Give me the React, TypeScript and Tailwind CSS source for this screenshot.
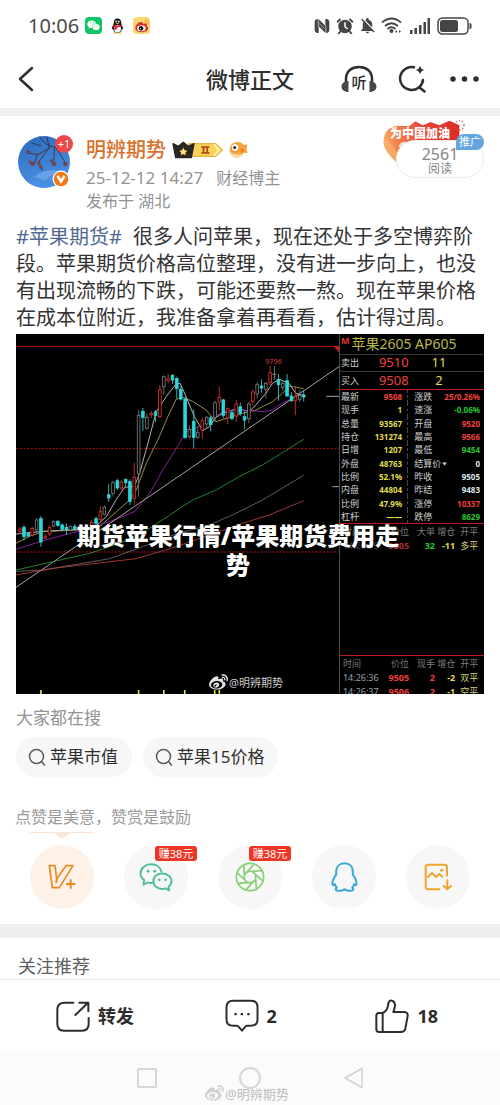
import type { ReactNode } from "react";
import clsx from "clsx";
import { FaWeibo, FaWeixin } from "react-icons/fa";
import { MdNotificationsOff } from "react-icons/md";

type Candle = [x: number, high: number, top: number, bottom: number, low: number, kind: "u" | "d" | "g"];

const CANDLES: Candle[] = [
  [30, 590, 597, 604, 612, "u"],
  [42, 585, 592, 620, 632, "d"],
  [55, 605, 610, 618, 622, "d"],
  [67, 590, 595, 615, 620, "u"],
  [80, 565, 570, 600, 610, "g"],
  [93, 558, 566, 636, 650, "d"],
  [106, 612, 620, 624, 628, "u"],
  [119, 585, 592, 612, 618, "u"],
  [131, 572, 574, 588, 592, "g"],
  [144, 570, 574, 586, 590, "d"],
  [157, 580, 585, 598, 604, "d"],
  [170, 580, 592, 598, 615, "d"],
  [182, 586, 590, 600, 604, "g"],
  [195, 582, 590, 598, 602, "d"],
  [208, 584, 590, 600, 606, "u"],
  [246, 570, 578, 590, 595, "u"],
  [259, 560, 566, 580, 586, "d"],
  [272, 530, 545, 568, 575, "u"],
  [284, 526, 532, 553, 556, "g"],
  [297, 462, 494, 504, 516, "d"],
  [310, 452, 458, 490, 500, "g"],
  [323, 446, 452, 474, 480, "d"],
  [335, 450, 456, 474, 480, "u"],
  [348, 446, 448, 458, 470, "d"],
  [361, 448, 455, 514, 525, "d"],
  [374, 398, 442, 505, 525, "u"],
  [387, 240, 256, 430, 500, "g"],
  [400, 234, 244, 262, 302, "d"],
  [412, 250, 262, 295, 298, "g"],
  [425, 242, 250, 254, 264, "u"],
  [438, 240, 246, 256, 276, "d"],
  [451, 165, 180, 260, 264, "u"],
  [463, 136, 140, 170, 195, "g"],
  [476, 132, 146, 152, 160, "u"],
  [489, 132, 136, 150, 162, "d"],
  [502, 140, 146, 176, 206, "d"],
  [514, 168, 178, 207, 212, "d"],
  [527, 200, 207, 323, 326, "d"],
  [540, 285, 298, 320, 326, "g"],
  [553, 238, 274, 322, 355, "d"],
  [565, 290, 308, 322, 326, "g"],
  [579, 262, 272, 300, 326, "u"],
  [592, 258, 262, 282, 296, "g"],
  [604, 258, 264, 284, 304, "d"],
  [617, 212, 218, 262, 276, "g"],
  [630, 170, 202, 216, 240, "u"],
  [642, 206, 210, 256, 264, "d"],
  [655, 232, 236, 264, 282, "u"],
  [668, 240, 248, 266, 270, "d"],
  [681, 210, 222, 258, 276, "u"],
  [693, 218, 230, 250, 258, "d"],
  [706, 244, 260, 270, 298, "d"],
  [719, 216, 222, 266, 280, "g"],
  [731, 178, 186, 214, 226, "u"],
  [744, 156, 164, 192, 205, "g"],
  [757, 148, 168, 174, 188, "d"],
  [770, 156, 160, 178, 205, "g"],
  [783, 108, 128, 158, 165, "u"],
  [796, 108, 132, 134, 150, "g"],
  [808, 132, 148, 164, 212, "d"],
  [821, 150, 160, 172, 182, "g"],
  [834, 132, 152, 198, 200, "d"],
  [847, 186, 198, 212, 216, "d"],
  [859, 170, 200, 212, 256, "u"],
  [872, 180, 196, 208, 216, "g"],
  [884, 180, 195, 201, 215, "d"],
];

const CANDLE_COLORS = { u: "#e0342f", d: "#2fd6d8", g: "#7c7c7c" };

const LINES = [
  { color: "#d8d8d8", points: "18,612 100,604 200,598 250,595 290,560 320,508 345,472 375,468 390,430 415,340 440,245 470,200 498,164 512,160 530,200 555,260 580,302 600,290 620,262 640,250 670,240 700,240 720,245 740,225 770,190 790,160 810,148 840,160 860,190 884,196" },
  { color: "#b5a95a", points: "18,640 60,618 100,605 200,600 270,590 320,545 360,510 380,480 410,400 445,330 475,260 500,208 520,202 550,214 590,240 620,275 660,262 700,250 740,240 790,215 820,190 840,168 884,176" },
  { color: "#a026b8", points: "18,658 100,632 200,605 300,575 375,545 420,490 460,420 510,340 530,305 580,285 640,245 690,240 765,245 790,240 810,225 850,205 870,195 884,195" },
  { color: "#c4c4c4", points: "18,772 480,458 990,110" },
  { color: "#2e9a3a", points: "18,720 120,697 240,670 330,640 420,595 480,556 510,535 550,510 620,480 690,440 760,405 820,368 884,328" },
  { color: "#6e6e6e", points: "18,724 100,720 200,703 300,686 400,650 500,612 600,585 680,550 760,510 830,468 884,436" },
  { color: "#b8413a", points: "18,735 130,715 240,702 380,686 500,650 600,615 700,580 780,555 840,530 884,512" },
];

const RED = "text-[#f0403c]";
const YELLOW = "text-[#e2dc4a]";
const GREEN = "text-[#25c632]";
const WHITE = "text-[#dbe6ea]";

const QUOTES = [
  ["最新", "9508", RED, "涨跌", "25/0.26%", RED],
  ["现手", "1", YELLOW, "速涨", "-0.06%", GREEN],
  ["总量", "93567", YELLOW, "开盘", "9520", RED],
  ["持仓", "131274", YELLOW, "最高", "9566", RED],
  ["日增", "1207", YELLOW, "最低", "9454", GREEN],
  ["外盘", "48763", YELLOW, "结算价", "0", WHITE],
  ["比例", "52.1%", YELLOW, "昨收", "9505", WHITE],
  ["内盘", "44804", YELLOW, "昨结", "9483", WHITE],
  ["比例", "47.9%", YELLOW, "涨停", "10337", RED],
  ["杠杆", "——", YELLOW, "跌停", "8629", GREEN],
];

function StatusBar() {
  return (
    <div className="flex h-[51px] items-center justify-between pr-7 pl-7">
      <div className="flex items-center">
        <span className="text-xl text-[#4a4a4a]">10:06</span>
        <span className="ml-[6px] flex size-[17px] items-center justify-center rounded-[4px] bg-[#10c565]">
          <FaWeixin className="size-[13px] text-white" />
        </span>
        <svg viewBox="0 0 24 30" className="ml-[9px] h-4 w-[13px]" aria-hidden="true">
          <path d="M12 1c5 0 7 4 7 8 0 4 4 8 3.500 13l-2-2c-1 5-4 8-8.500 8s-7.500-3-8.500-8l-2 2C1 17 5 13 5 9c0-4 2-8 7-8z" fill="#15151a" />
          <ellipse cx="12" cy="20" rx="6.500" ry="7" fill="#fff" />
          <path d="M4 12c5 3 11 3 16 0l1 3c-3 2-6 2.500-9 2.500l-3 5H6l.5-6-3.500-2z" fill="#e3222b" />
          <ellipse cx="9.500" cy="6.500" rx="1.500" ry="2" fill="#fff" />
          <ellipse cx="14.500" cy="6.500" rx="1.500" ry="2" fill="#fff" />
          <path d="M8 10q4-2 8 0-4 3-8 0zM5 27h6v2H4zM13 27h6l1 2h-7z" fill="#f0a020" />
        </svg>
        <span className="ml-[9px] flex size-[17px] items-center justify-center rounded-[4px] bg-[#fbd873]">
          <svg viewBox="0 0 24 24" className="size-4" aria-hidden="true">
            <path d="M2 15c0-5 6-10 10-9 2 .5 1 3 1 3s5-2 6 0c1 1.500-.5 3 0 3.500 5 3 1 9-7 9-6 0-10-3-10-6.500z" fill="#dd2a25" />
            <ellipse cx="11" cy="15.500" rx="6.500" ry="4.500" fill="#fff" />
            <circle cx="10.500" cy="15.500" r="3.500" fill="#111" />
            <circle cx="9.500" cy="16" r="1" fill="#fff" />
            <path d="M16 3c4-.5 6.500 3 5.500 6.500M16.500 6c2-.3 3 1 2.500 2.700" fill="none" stroke="#f39a2b" strokeWidth="1.500" />
          </svg>
        </span>
      </div>
      <div className="flex items-center text-[#454545]">
        <svg viewBox="0 0 48 48" className="size-4" aria-hidden="true">
          <path d="M14 3H9Q2 4 2 12v24q0 8 7 9h5zM34 3h5q7 1 7 9v24q0 8-7 9h-5z" fill="currentColor" />
          <path d="M14 8l18 18v18M34 40L16 22V4" stroke="#fff" strokeWidth="9" fill="none" />
          <path d="M14 6l19 19v18M34 42L15 23V5M17 14l15 15M17 20l15 15" stroke="currentColor" strokeWidth="3.500" fill="none" />
        </svg>
        <svg viewBox="0 0 24 24" className="ml-[6px] size-[18px]" aria-hidden="true">
          <circle cx="12" cy="12.500" r="9" fill="currentColor" />
          <path d="M12 7v6l3.500 3" fill="none" stroke="#fff" strokeWidth="2" />
          <path d="M1.500 7L6 2.500M22.500 7L18 2.500M6 19l-3 3.500M18 19l3 3.500" stroke="currentColor" strokeWidth="2.500" />
        </svg>
        <MdNotificationsOff className="ml-1 size-[19px]" />
        <svg viewBox="0 0 42 34" className="ml-1 h-[17px] w-[21px]" aria-hidden="true">
          <g fill="none" stroke="currentColor" strokeWidth="3.500">
            <path d="M2 11q19-16 38 0M8 18q13-11 26 0M13 24q8-7 16 0" />
          </g>
          <circle cx="21" cy="28" r="4" fill="currentColor" />
          <path d="M28 29l4-3v6zM40 29l-4-3v6z" fill="currentColor" />
        </svg>
        <svg viewBox="0 0 40 32" className="ml-2 h-4 w-5" fill="currentColor" aria-hidden="true">
          <path d="M0 24h5v8H0zM9 20h5v12H9zM18 14h5v18h-5zM27 8h5v24h-5zM35 0h5v32h-5z" />
        </svg>
        <svg viewBox="0 0 70 36" className="ml-[7px] h-[18px] w-[35px]" aria-hidden="true">
          <rect x="2" y="2" width="60" height="32" rx="9" fill="none" stroke="currentColor" strokeWidth="3" />
          <rect x="6" y="6" width="36" height="24" rx="5" fill="currentColor" />
          <path d="M65 12q4 0 4 3v6q0 3-4 3z" fill="currentColor" />
        </svg>
      </div>
    </div>
  );
}

function TopNav() {
  return (
    <header className="relative flex h-[57px] items-center justify-between pr-[21px] pb-px pl-[18px] text-[#2e2e2e]">
      <button type="button" aria-label="返回">
        <svg viewBox="0 0 18 26" className="h-[26px] w-[18px]" fill="none" stroke="currentColor" strokeWidth="2.500" strokeLinecap="round" strokeLinejoin="round">
          <path d="M14 2L2 13l12 11" />
        </svg>
      </button>
      <h1 className="absolute left-1/2 -translate-x-1/2 text-[22px] font-medium">微博正文</h1>
      <div className="flex items-center">
        <button type="button" aria-label="听" className="relative h-7 w-9">
          <svg viewBox="0 0 72 56" className="h-7 w-9" aria-hidden="true">
            <path d="M10 40V28C10 12 22 4 36 4s26 8 26 24v12" fill="none" stroke="currentColor" strokeWidth="5" />
            <path d="M15 32v22C6 54 1 49 1 43s5-11 14-11zM57 32v22c9 0 14-5 14-11s-5-11-14-11z" fill="#484848" />
          </svg>
          <span aria-hidden="true" className="absolute inset-x-0 top-[7px] text-center text-[15px] leading-5 font-medium">听</span>
        </button>
        <button type="button" aria-label="搜索" className="ml-[21px]">
          <svg viewBox="0 0 56 56" className="size-7" aria-hidden="true">
            <path d="M32 4.500A23 23 0 1 0 50 30M42 44l11 9" fill="none" stroke="currentColor" strokeWidth="5" strokeLinecap="round" />
            <path d="M44 1q1.500 8 9 9-7.500 1.500-9 9-1.500-7.500-9-9 7.500-1 9-9z" fill="currentColor" />
          </svg>
        </button>
        <button type="button" aria-label="更多" className="ml-6">
          <svg viewBox="0 0 58 12" className="h-[6px] w-[29px]" fill="currentColor">
            <circle cx="6" cy="6" r="5.500" />
            <circle cx="29" cy="6" r="5.500" />
            <circle cx="52" cy="6" r="5.500" />
          </svg>
        </button>
      </div>
    </header>
  );
}

function Avatar() {
  return (
    <div className="relative size-[52px] shrink-0">
      <svg viewBox="0 0 156 156" className="size-[52px]" role="img" aria-label="头像">
        <defs>
          <linearGradient id="sky" x1="0" y1="0" x2="0.3" y2="1">
            <stop offset="0" stopColor="#2a69bd" />
            <stop offset="1" stopColor="#4a90e2" />
          </linearGradient>
          <clipPath id="round">
            <circle cx="78" cy="78" r="78" />
          </clipPath>
        </defs>
        <g clipPath="url(#round)">
          <rect width="156" height="156" fill="url(#sky)" />
          <path d="M50 122q30-30 90-14-34 0-60 26z" fill="#7fb2ee" opacity=".6" />
          <g fill="none" stroke="#3a2a38" strokeWidth="2.500">
            <path d="M64 0q14 30 50 34l30 50M86 0l8 36-34 20-34-6M94 36l-34 44M110 34l-4 56M60 56l-14 30M114 40l24 6M40 20l30 10M60 80l14 24" />
          </g>
          <g fill="#6b4a55">
            <circle cx="30" cy="48" r="6" />
            <circle cx="44" cy="84" r="7" />
            <circle cx="36" cy="78" r="5" />
            <circle cx="62" cy="80" r="6" />
            <circle cx="68" cy="92" r="6" />
            <circle cx="108" cy="84" r="7" />
            <circle cx="100" cy="74" r="5" />
            <circle cx="142" cy="84" r="7" />
            <circle cx="56" cy="56" r="5" />
          </g>
        </g>
      </svg>
      <span className="absolute -top-px -right-[3px] flex size-[18px] items-center justify-center rounded-full bg-[#ef4747] text-[11px] text-white">+1</span>
      <svg viewBox="0 0 36 36" className="absolute right-0 bottom-0 size-[18px]" aria-hidden="true">
        <circle cx="18" cy="18" r="17" fill="#fff" />
        <circle cx="18" cy="18" r="14.500" fill="#ee7a18" />
        <path d="M11 12l7 11 7-11" fill="none" stroke="#fff" strokeWidth="5" />
      </svg>
    </div>
  );
}

function ReadCount() {
  return (
    <div className="relative h-[62px] w-[102px]">
      <svg viewBox="0 0 306 180" className="absolute top-[2px] left-0 h-[60px] w-[102px]" aria-hidden="true">
        <defs>
          <linearGradient id="flag" x1="0" x2="1">
            <stop offset="0" stopColor="#f6a65b" />
            <stop offset=".45" stopColor="#ec4c3a" />
            <stop offset="1" stopColor="#d92c28" />
          </linearGradient>
        </defs>
        <path d="M46 24h36l18-14 22 12 24-10 26 10 30-14 30 14v70H70q-4 30-24 42Q26 120 8 88 0 60 14 40q10-14 32-16z" fill="url(#flag)" />
        <path d="M8 60q30 20 44 60l-8 14Q4 100 4 70z" fill="#f9b46c" opacity=".7" />
        <circle cx="232" cy="22" r="14" fill="none" stroke="#d94b3d" strokeWidth="4" strokeDasharray="3 6" />
        <path d="M50 84q10-20 34-8l12 12-30 14z" fill="#fbe0c8" />
      </svg>
      <span className="absolute top-2 left-2 text-[12px] leading-5 font-black whitespace-nowrap text-white">为中国加油</span>
      <div className="absolute right-0 bottom-0 flex h-[38px] w-[88px] flex-col items-center rounded-[19px] border border-[#ececec] bg-white pt-1">
        <span className="text-base leading-[18px] text-[#858585]">2561</span>
        <span className="text-xs leading-[12px] text-[#858585]">阅读</span>
      </div>
      <span className="absolute top-[18px] right-0 rounded-tl-lg rounded-tr-lg rounded-br-lg bg-[#62a5df] px-[3px] text-[11px] leading-4 text-white">推广</span>
    </div>
  );
}

function PostHeader() {
  return (
    <div className="flex items-start justify-between pr-4 pl-[18px]">
      <div className="flex pt-5">
        <Avatar />
        <div className="ml-4">
          <div className="flex h-7 items-center">
            <a href="#author" className="text-xl leading-7 font-medium text-[#d9702a]">明辨期势</a>
            <svg viewBox="0 0 156 54" className="ml-[6px] h-[18px] w-[52px]" aria-hidden="true">
              <path d="M50 8h82l20 19-20 19H50z" fill="#f8d458" stroke="#e0a92c" strokeWidth="3" />
              <path d="M126 9l14 18-14 18" fill="none" stroke="#fff3b8" strokeWidth="5" />
              <path d="M88 16h24v5h-4v12h4v5H88v-5h4V21h-4zM97 21v12h6V21z" fill="#b04a18" />
              <path d="M3 8l16 8L34 4l15 12 17-8-8 42H11z" fill="#2b2622" stroke="#2b2622" strokeWidth="4" strokeLinejoin="round" />
              <path d="M34 20l4 8 8 1-6 6 2 8-8-4-8 4 2-8-6-6 8-1z" fill="#ffe27a" />
            </svg>
            <svg viewBox="0 0 60 56" className="ml-[5px] h-[18px] w-[19px]" aria-hidden="true">
              <path d="M2 26Q4 4 26 3q14 0 20 10l12-3-3 14 3 14-11-2Q40 54 22 52 2 48 2 26z" fill="#f5a13c" />
              <path d="M4 34q18 14 42 4-6 15-24 14Q8 50 4 34z" fill="#fbd9a2" />
              <circle cx="19" cy="20" r="10" fill="#fff" />
              <circle cx="18" cy="20" r="5" fill="#23252b" />
              <path d="M40 22q8 4 6 12l-10-4z" fill="#e57c1e" />
            </svg>
          </div>
          <p className="flex h-7 items-center gap-[13px] text-[#929292]">
            <span className="text-[17px]">25-12-12 14:27</span>
            <span className="text-base">财经博主</span>
          </p>
          <p className="text-base leading-[18px] text-[#929292]">发布于 湖北</p>
        </div>
      </div>
      <ReadCount />
    </div>
  );
}

function KLineChart() {
  return (
    <svg viewBox="18 12 972 1080" preserveAspectRatio="none" className="h-full min-w-0 flex-1" role="img" aria-label="苹果期货K线">
      <path d="M18 49H990" stroke="#b01818" strokeWidth="3" />
      <path d="M974 49h16v18z" fill="#d21d1d" />
      <path d="M18 356H990M18 666H990" stroke="#a31616" strokeWidth="3" strokeDasharray="7 4" />
      {LINES.map((line) => (
        <polyline key={line.color} points={line.points} fill="none" stroke={line.color} strokeWidth="2.500" strokeLinejoin="round" />
      ))}
      {CANDLES.map(([x, high, top, bottom, low, kind]) => (
        <g key={x} stroke={CANDLE_COLORS[kind]} strokeWidth="2.500">
          <path d={`M${x} ${high}V${top}M${x} ${bottom}V${low}`} />
          <rect x={x - 4} y={top} width="8" height={bottom - top} fill={kind === "d" ? CANDLE_COLORS.d : "#000"} />
        </g>
      ))}
      <path d="M952 199h38M970 470h20" stroke="#a8a8a8" strokeWidth="3" />
      <path d="M93 1080v12M387 1080v12M463 1080v12M526 1080v12M616 1080v12M630 1080v12" stroke="#e6dc4a" strokeWidth="5" />
      <text x="768" y="103" fontSize="22" fill="#d23a3a">9796</text>
    </svg>
  );
}

function TapeRow({ cells, colors }: { cells: string[]; colors: string[] }) {
  return (
    <tr className="h-[14px]">
      {cells.map((cell, i) => (
        <td key={i} className={clsx("p-0", i === 0 ? "pl-[3px] text-left" : "text-right", i > 0 && i < 4 && "font-bold", colors[i])}>
          {cell}
        </td>
      ))}
    </tr>
  );
}

function TapeTable({ volume, children }: { volume: string; children: ReactNode }) {
  return (
    <table className="w-full table-fixed text-[9px] leading-[13px] whitespace-nowrap">
      <thead>
        <tr className="h-[14px] text-[#7d7d7d]">
          <th className="w-[30%] p-0 pl-[3px] text-left font-normal">时间</th>
          <th className="w-[18%] p-0 text-right font-normal">价位</th>
          <th className="w-[18%] p-0 text-right font-normal">{volume}</th>
          <th className="w-[14%] p-0 text-right font-normal">增仓</th>
          <th className="w-[16%] p-0 text-right font-normal">开平</th>
          <th className="w-[4%] p-0" />
        </tr>
      </thead>
      <tbody>{children}</tbody>
    </table>
  );
}

function QuotePanel() {
  const tape = ["text-[#9aa0ae]", RED, RED, YELLOW, "text-[#d5cf7a]"];
  return (
    <div className="flex h-full w-[31%] shrink-0 flex-col overflow-hidden border-l border-[#4a4a4a]">
      <div className="flex h-[21px] items-center border-b border-[#3a3a3a] pl-px whitespace-nowrap">
        <span className="self-start text-[9px] font-bold text-[#e8322e]">M</span>
        <span className="ml-[2px] text-sm text-[#b9b548]">苹果2605 AP605</span>
      </div>
      <div className="flex h-[17px] items-center border-b border-[#3a3a3a] pl-px text-[9px] text-[#cfcfcf]">
        卖出
        <span className={clsx("ml-5 w-9 text-[13px]", RED)}>9510</span>
        <span className={clsx("w-12 text-center text-[13px]", YELLOW)}>11</span>
      </div>
      <div className="flex h-[18px] items-center border-b border-[#c01a1a] pl-px text-[9px] text-[#cfcfcf]">
        买入
        <span className={clsx("ml-5 w-9 text-[13px]", RED)}>9508</span>
        <span className={clsx("w-12 text-center text-[13px]", YELLOW)}>2</span>
      </div>
      <table className="h-[134px] w-full table-fixed border-b border-[#c01a1a] text-[9px] leading-[13px] whitespace-nowrap">
        <tbody>
          {QUOTES.map(([label, value, color, label2, value2, color2], i) => (
            <tr key={i}>
              <th className="w-[17%] p-0 pl-px text-left font-normal text-[#cfcfcf]">{label}</th>
              <td className={clsx("w-[30%] border-r border-dashed border-[#444] p-0 pr-[5px] text-right text-[8px] font-bold", color)}>{value}</td>
              <th className="w-[24%] p-0 pl-[6px] text-left font-normal text-[#cfcfcf]">
                {label2}
                {label2 === "结算价" && (
                  <svg viewBox="0 0 10 6" className="ml-px inline h-1 w-[5px]" fill="currentColor" aria-hidden="true">
                    <path d="M0 0h10L5 6z" />
                  </svg>
                )}
              </th>
              <td className={clsx("w-[29%] p-0 pr-1 text-right text-[8px] font-bold", color2)}>{value2}</td>
            </tr>
          ))}
        </tbody>
      </table>
      <div className="flex-1">
        <TapeTable volume="大单">
          <TapeRow cells={["14:26:35", "9505", "32", "-11", "多平", ""]} colors={["text-[#3b3e45]", "text-[#a82a2a]", GREEN, YELLOW, "text-[#d5cf7a]"]} />
        </TapeTable>
      </div>
      <div className="h-[39px] overflow-hidden border-t border-[#c01a1a]">
        <TapeTable volume="现手">
          <TapeRow cells={["14:26:36", "9505", "2", "-2", "双平", ""]} colors={tape} />
          <TapeRow cells={["14:26:37", "9506", "2", "-1", "空平", ""]} colors={tape} />
        </TapeTable>
      </div>
    </div>
  );
}

function PostImage() {
  return (
    <figure className="relative mx-4 mt-[3px] h-[360px] overflow-hidden bg-black">
      <div className="flex h-full">
        <KLineChart />
        <QuotePanel />
      </div>
      <figcaption className="absolute inset-x-0 top-[187px] pr-20 pl-14 text-center text-2xl leading-[29px] font-black text-white">
        期货苹果行情/苹果期货费用走势
      </figcaption>
      <div className="absolute bottom-[2px] left-[193px] flex items-center gap-px text-[11px] leading-4 text-[#c9c9c9]">
        <FaWeibo className="size-[19px] text-[#e2e2e2]" />
        @明辨期势
      </div>
    </figure>
  );
}

function SearchChip({ label }: { label: string }) {
  return (
    <a href="#search" className="flex h-10 items-center gap-1 rounded-full bg-[#f7f7f7] pr-[14px] pl-3 text-[17px] text-[#2f2f2f]">
      <svg viewBox="0 0 36 36" className="size-[18px] text-[#5a5a5a]" fill="none" stroke="currentColor" strokeWidth="3" strokeLinecap="round" aria-hidden="true">
        <circle cx="17" cy="17" r="14" />
        <path d="M27 27l6 7" />
      </svg>
      {label}
    </a>
  );
}

function RewardButton({ label, tag, active, children }: { label: string; tag?: string; active?: boolean; children: ReactNode }) {
  return (
    <button
      type="button"
      aria-label={label}
      className={clsx("relative flex size-16 items-center justify-center rounded-full", active ? "bg-[#fef2e8]" : "bg-[#f7f7f7]")}
    >
      {children}
      {tag && (
        <span className="absolute top-px left-[31px] w-[42px] rounded-[3px] bg-[#ee3524] text-center text-[11px] leading-[15px] whitespace-nowrap text-white">{tag}</span>
      )}
    </button>
  );
}

function Rewards() {
  return (
    <section>
      <h2 className="mt-7 px-[15px] text-base leading-6 text-[#9a9a9a]">点赞是美意，赞赏是鼓励</h2>
      <svg viewBox="0 0 64 8" className="mt-[3px] ml-[30px] block h-2 w-16" aria-hidden="true">
        <path d="M0 0h64v1H40l-8 6-8-6H0z" fill="#fbe5d6" />
      </svg>
      <div className="mt-[5px] flex justify-between px-[30px] pb-[15px]">
        <RewardButton label="V+会员" active>
          <svg viewBox="0 0 84 78" className="h-[26px] w-7 text-[#ea8a22]" fill="none" stroke="currentColor" strokeWidth="5" strokeLinejoin="round">
            <path d="M4 5h17l5 40L54 5h21L34 71H13z" />
            <path d="M26 45l-1 12M68 46v28M54 60h28" strokeWidth="6" />
          </svg>
        </RewardButton>
        <RewardButton label="微信" tag="赚38元">
          <svg viewBox="0 0 102 88" className="h-[29px] w-[34px] text-[#50bf9c]" fill="none" stroke="currentColor" strokeWidth="6" strokeLinejoin="round" strokeLinecap="round">
            <path d="M42 60q-8 2-16-1L13 66l2-14Q4 44 4 32C4 16 18 4 36 4c16 0 28 9 31 22" />
            <path d="M70 32c16 0 28 10 28 23 0 8-4 13-9 17l2 11-11-6q-5 2-10 2c-15 0-27-10-27-24s12-23 27-23z" />
            <g fill="currentColor" stroke="none">
              <circle cx="27" cy="25" r="4.500" />
              <circle cx="47" cy="25" r="4.500" />
              <circle cx="61" cy="51" r="4" />
              <circle cx="80" cy="51" r="4" />
            </g>
          </svg>
        </RewardButton>
        <RewardButton label="朋友圈" tag="赚38元">
          <svg viewBox="-45 -45 90 90" className="size-[30px] text-[#86cf74]" fill="none" stroke="currentColor" strokeWidth="5">
            <circle r="41" />
            {[0, 45, 90, 135, 180, 225, 270, 315].map((deg) => (
              <path key={deg} d="M-7 -17L7 -17L36 -19" transform={`rotate(${deg})`} />
            ))}
          </svg>
        </RewardButton>
        <RewardButton label="QQ">
          <svg viewBox="0 0 80 90" className="h-[30px] w-[27px] text-[#3aa8dc]" fill="none" stroke="currentColor" strokeWidth="6" strokeLinejoin="round">
            <path d="M40 4C24 4 15 15 15 29v9C9 46 3 56 4 67c1 4 4 3 7-1 1 5 3 8 6 11-5 3-5 9 3 9 8 1 14 0 20-4 6 4 12 5 20 4 8 0 8-6 3-9 3-3 5-6 6-11 3 4 6 5 7 1 1-11-5-21-11-29v-9C65 15 56 4 40 4z" />
          </svg>
        </RewardButton>
        <RewardButton label="保存图片">
          <svg viewBox="0 0 84 84" className="size-7 text-[#f0a42e]" fill="none" stroke="currentColor" strokeWidth="6" strokeLinecap="round" strokeLinejoin="round">
            <path d="M46 79H13q-8 0-8-8V13q0-8 8-8h48q8 0 8 8v25M12 42l12-12 12 12 10-9 9 8" />
            <path d="M70 52v26M59 69l11 10 11-10" />
            <circle cx="53" cy="22" r="4.500" fill="currentColor" stroke="none" />
          </svg>
        </RewardButton>
      </div>
    </section>
  );
}

function ActionBar() {
  return (
    <div className="flex h-[72px] items-center justify-between border-t border-[#ececec] pr-[62px] pl-14 text-lg font-bold text-[#2d2d2d]">
      <button type="button" className="flex items-center gap-2">
        <svg viewBox="0 0 102 96" className="h-8 w-[34px]" fill="none" stroke="currentColor" strokeWidth="6" strokeLinecap="round" strokeLinejoin="round" aria-hidden="true">
          <path d="M52 8H26Q4 8 4 28v44q0 20 20 20h54q20 0 20-20V54" />
          <path d="M58 45L96 8M70 8h27v26" />
        </svg>
        转发
      </button>
      <button type="button" aria-label="评论 2" className="mr-2 flex items-center gap-2">
        <svg viewBox="0 0 102 100" className="h-[33px] w-[34px]" fill="none" stroke="currentColor" strokeWidth="6" strokeLinejoin="round" aria-hidden="true">
          <path d="M24 5h54q20 0 20 20v36q0 20-20 20H66q-4 0-7 6l-8 9-8-9q-3-6-7-6H24Q4 81 4 61V25Q4 5 24 5z" />
          <path d="M28 46h7M47 46h7M67 46h7" strokeWidth="7" />
        </svg>
        2
      </button>
      <button type="button" aria-label="赞 18" className="flex items-center gap-2">
        <svg viewBox="0 0 102 102" className="size-[34px]" fill="none" stroke="currentColor" strokeWidth="6" strokeLinejoin="round" aria-hidden="true">
          <path d="M4 50q0-8 8-8h10q12-4 16-18l3-14q3-6 10-5 9 2 9 14-1 10-5 20h33q11 1 10 12l-7 38q-3 10-13 10H12q-8 0-8-8zM23 42v57" />
        </svg>
        18
      </button>
    </div>
  );
}

function SystemNav() {
  return (
    <nav aria-label="系统导航" className="relative flex h-[54px] items-center justify-center gap-[82px] bg-[#fbfbfb] text-[#d2d2d2]">
      <button type="button" aria-label="最近任务" className="size-[20px] rounded-[2px] border-2 border-[#d6d6d6]" />
      <button type="button" aria-label="主屏幕" className="size-[22px] rounded-full border-2 border-[#d6d6d6]" />
      <button type="button" aria-label="后退">
        <svg viewBox="0 0 42 44" className="h-[22px] w-[21px]" fill="none" stroke="currentColor" strokeWidth="3" strokeLinejoin="round">
          <path d="M38 3v38L4 22z" />
        </svg>
      </button>
      <div className="absolute bottom-[2px] left-[41%] flex items-center text-[13px] leading-[18px] text-[#bdbdbd]">
        <FaWeibo className="mr-px size-[19px] text-[#cfcfcf]" />
        @明辨期势
      </div>
    </nav>
  );
}

export default function App() {
  return (
    <div className="min-h-screen w-full bg-white font-['Noto_Sans','Noto_Sans_CJK_SC',sans-serif]" lang="zh-CN">
      <StatusBar />
      <TopNav />
      <div className="h-2 bg-[#efefef]" />
      <main>
        <article>
          <PostHeader />
          <p className="mt-[13px] px-4 text-xl leading-[27px] text-[#333]">
            <a href="#topic" className="mr-[6px] text-[#52698f]">#苹果期货#</a> 很多人问苹果，现在还处于多空博弈阶段。苹果期货价格高位整理，没有进一步向上，也没有出现流畅的下跌，可能还要熬一熬。现在苹果价格在成本位附近，我准备拿着再看看，估计得过周。
          </p>
          <PostImage />
        </article>
        <section className="mt-3 px-4">
          <h2 className="text-[17px] leading-6 text-[#929292]">大家都在搜</h2>
          <div className="mt-[7px] flex gap-[11px]">
            <SearchChip label="苹果市值" />
            <SearchChip label="苹果15价格" />
          </div>
        </section>
        <Rewards />
        <div className="h-[14px] bg-[#efefef]" />
        <h2 className="px-[18px] pt-4 text-lg leading-[25px] text-[#5f5f5f]">关注推荐</h2>
      </main>
      <ActionBar />
      <SystemNav />
    </div>
  );
}
